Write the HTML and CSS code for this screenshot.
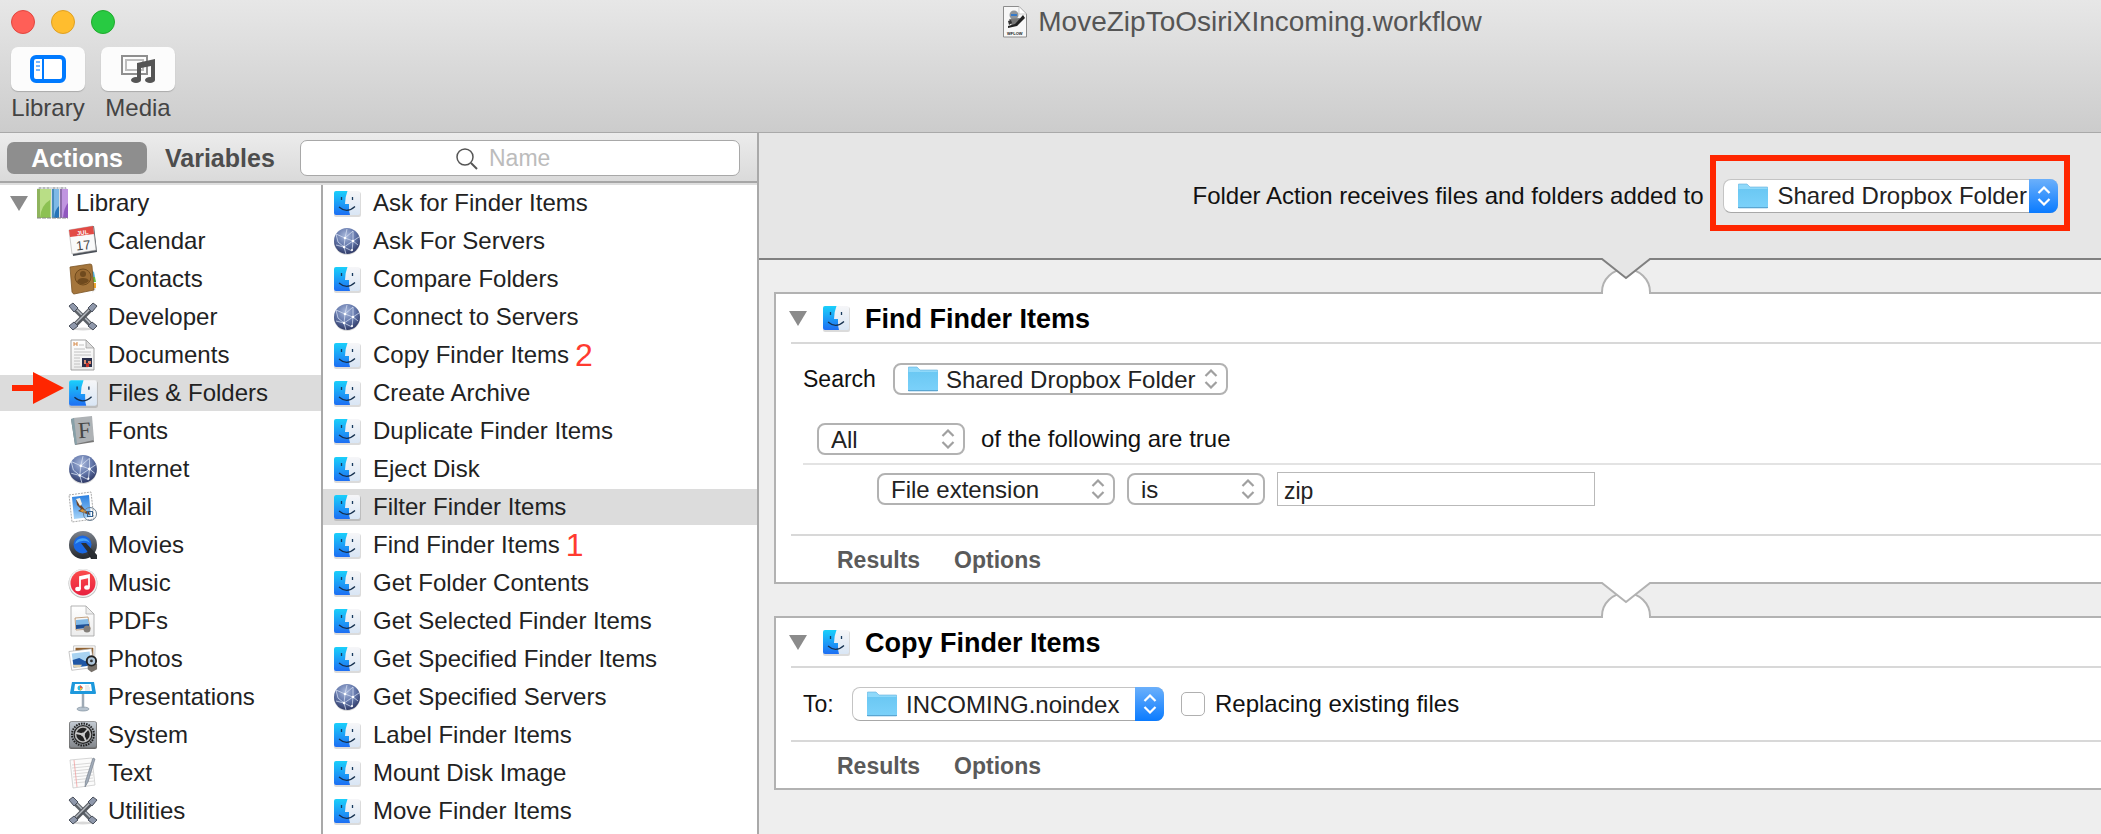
FILE: index.html
```
<!DOCTYPE html>
<html lang="en">
<head>
<meta charset="utf-8">
<title>MoveZipToOsiriXIncoming.workflow</title>
<link rel="stylesheet" href="styles.css">
</head>
<body>
<svg class="sprite" aria-hidden="true">
  <defs>
    <linearGradient id="gBlue" x1="0" y1="0" x2="0" y2="1"><stop offset="0" stop-color="#1ad0fb"/><stop offset="1" stop-color="#1e6ef3"/></linearGradient>
    <linearGradient id="gFace" x1="0" y1="0" x2="0" y2="1"><stop offset="0" stop-color="#f6f6f8"/><stop offset="1" stop-color="#d9e6f5"/></linearGradient>
    <radialGradient id="gGlobe" cx=".45" cy=".3" r=".75"><stop offset="0" stop-color="#a9b9dc"/><stop offset=".5" stop-color="#6478ab"/><stop offset="1" stop-color="#27305c"/></radialGradient>
    <linearGradient id="gMetal" x1="0" y1="0" x2="0" y2="1"><stop offset="0" stop-color="#c3cad2"/><stop offset="1" stop-color="#84888d"/></linearGradient>
    <linearGradient id="gPaper" x1="0" y1="0" x2="0" y2="1"><stop offset="0" stop-color="#ffffff"/><stop offset="1" stop-color="#ececec"/></linearGradient>
    <linearGradient id="gFolder" x1="0" y1="0" x2="0" y2="1"><stop offset="0" stop-color="#6bc8f3"/><stop offset="1" stop-color="#7bd1fa"/></linearGradient>
    <linearGradient id="gSky" x1="0" y1="0" x2="0" y2="1"><stop offset="0" stop-color="#2a7fe0"/><stop offset="1" stop-color="#a5d3f8"/></linearGradient>
    <linearGradient id="gMusic" x1="0" y1="0" x2="0" y2="1"><stop offset="0" stop-color="#fb4b4b"/><stop offset="1" stop-color="#e8203f"/></linearGradient>
    <linearGradient id="gQt" x1="0" y1="0" x2="0" y2="1"><stop offset="0" stop-color="#7d838d"/><stop offset="1" stop-color="#23272d"/></linearGradient>
  </defs>
  <symbol id="finder" viewBox="0 0 28 28">
    <rect x="1" y="3" width="27" height="25" rx="2" fill="#000" opacity=".14"/>
    <rect x="1" y="2" width="26" height="24" rx="2" fill="url(#gFace)"/>
    <path d="M3 2H14.500Q12 8 12 15H16V18Q15.800 22 17 26H3Q1 26 1 24V4Q1 2 3 2Z" fill="url(#gBlue)"/>
    <path d="M8.500 8V11M19.500 8V11" stroke="#173a5e" stroke-width="1.300" fill="none"/>
    <path d="M6 18Q14 25 22 17.500" stroke="#16304e" stroke-width="1.200" fill="none"/>
  </symbol>
  <symbol id="globe" viewBox="0 0 28 28">
    <circle cx="14" cy="15" r="13" fill="#000" opacity=".15"/>
    <circle cx="14" cy="14" r="13" fill="url(#gGlobe)"/>
    <path d="M3 7L12 11L20 4M12 11L11 20L3 18M12 11L20 14L26 10M11 20L20 14L19 24M11 20L13 27M3 7L5 15L11 20M20 4L20 14L25 18M19 24L11 20M12 11L14 2" stroke="#d6e0f2" stroke-width=".9" fill="none" opacity=".85"/>
    <g fill="#fff"><circle cx="12" cy="11" r="1.300"/><circle cx="11" cy="20" r="1.200"/><circle cx="20" cy="14" r="1.300"/><circle cx="19" cy="23" r="1"/></g>
  </symbol>
  <symbol id="folder" viewBox="0 0 30 26">
    <path d="M0 2Q0 1 1 1H9L12 4H29Q30 4 30 5V24Q30 25 29 25H1Q0 25 0 24Z" fill="#8fd9fa" stroke="#62aedb" stroke-width=".6"/>
    <path d="M0 6H30V24Q30 25 29 25H1Q0 25 0 24Z" fill="url(#gFolder)"/>
    <path d="M0 24.500H30" stroke="#5aa6d2"/>
  </symbol>
  <symbol id="books" viewBox="0 0 32 32">
    <path d="M1 2L3 0H30L31 2V31H1Z" fill="#d9dde0"/>
    <path d="M3 1H14M17 1H22M25 1H30" stroke="#999" stroke-dasharray="2 2"/>
    <path d="M1 2H15V31H1Z" fill="#b9de86"/><path d="M4 31Q5 18 14 13V31Z" fill="#8cc152"/><path d="M1 2H4V31H1Z" fill="#8fb45d"/>
    <path d="M16 2H23V31H16Z" fill="#7eb9e6"/><path d="M18 31Q19 22 23 19V31Z" fill="#2674b8"/><path d="M16 2H18V31H16Z" fill="#4b8ebe"/>
    <path d="M24 2H32V31H24Z" fill="#c095e0"/><path d="M27 31Q28 20 32 16V31Z" fill="#9058bf"/><path d="M24 2H26V31H24Z" fill="#8f6eac"/>
    <path d="M1 31H32" stroke="#888" stroke-dasharray="4 1"/>
  </symbol>
  <symbol id="contacts" viewBox="0 0 30 32">
    <path d="M23 6L26 8L28 27L24 30Z" fill="#eee"/><path d="M24 8L26 9L27 14H24Z" fill="#52b8e8"/><path d="M25 14H27L28 19H25Z" fill="#68bd49"/><path d="M25 20H28V25H25Z" fill="#efa72e"/>
    <path d="M2 4L22 1Q24 1 24 3L26 27L6 31Q5 31 4 29Z" fill="#a5763c" stroke="#7b5424" stroke-width=".8"/>
    <circle cx="15" cy="14" r="8" fill="#9b6c34" stroke="#714b1d"/><circle cx="15" cy="11" r="3" fill="#6f4a1e"/><path d="M9 19Q10 15 15 15Q20 15 21 18Q15 24 9 19Z" fill="#6f4a1e"/>
  </symbol>
  <symbol id="tools" viewBox="0 0 30 30">
    <ellipse cx="15" cy="27" rx="10" ry="1.500" fill="#000" opacity=".15"/>
    <path d="M5 5L25 25" stroke="#5d6268" stroke-width="5"/><path d="M5 4L25 24" stroke="#b9bec5" stroke-width="1.500"/>
    <path d="M25 5L5 25" stroke="#55595f" stroke-width="5"/><path d="M24 5L5 24" stroke="#b5b9bf" stroke-width="1.500"/>
    <g fill="#8f98ab" stroke="#4a505c"><path d="M1 4L5 1L10 6L6 10Z"/><path d="M29 4L25 1L20 6L24 10Z"/><path d="M1 24L6 20L10 24L5 28Z"/><path d="M29 24L24 20L20 24L25 28Z"/></g>
  </symbol>
  <symbol id="document" viewBox="0 0 30 32">
    <path d="M3 1H18L26 9V31H3Z" fill="url(#gPaper)" stroke="#999" stroke-width=".9"/><path d="M18 1V9H26Z" fill="#ddd" stroke="#999" stroke-width=".7"/>
    <path d="M6 3V7M9 3V7M6 5H9" stroke="#d58a4a" fill="none"/>
    <path d="M11 6H16M6 10H17M6 13H23M6 16H23M6 19H12M6 22H12M6 25H12M6 28H20" stroke="#bbb" stroke-width=".9"/>
    <path d="M14 19H24V28H14Z" fill="#2b2f49"/><path d="M16 21H18V25H16ZM20 22H23V25H20Z" fill="#d98a70"/><path d="M18 24H21V28H18Z" fill="#c7312b"/>
  </symbol>
  <symbol id="mail" viewBox="0 0 30 32">
    <path d="M1 4L23 1L26 28L4 31Z" fill="#fff" stroke="#a9a9a9" stroke-dasharray="2 1"/>
    <path d="M4 6L21 4L23 26L6 28Z" fill="url(#gSky)"/>
    <path d="M8 8L13 14L18 20L21 21L22 24L16 22L10 20L13 18L9 14Z" fill="#6d4528"/><path d="M8 8L12 7L14 13L12 15Z" fill="#f5f1e8"/><path d="M14 18L18 20L17 22L12 20Z" fill="#d99535"/>
    <circle cx="22" cy="23" r="6.500" fill="none" stroke="#6c7f91"/><rect x="19.500" y="20.500" width="5" height="5" fill="none" stroke="#36618d"/>
  </symbol>
  <symbol id="movies" viewBox="0 0 30 30">
    <circle cx="15" cy="15" r="14" fill="url(#gQt)"/><path d="M17 17L23 20L29 26V29H23Z" fill="#24272b"/>
    <circle cx="14.500" cy="14.500" r="9" fill="#1a68e3"/><path d="M7 14A8 8 0 0 1 22 13Q16 8 7 14Z" fill="#44a4fa"/>
    <path d="M13 13L18 13L29 25V29H25Z" fill="#2a2e33"/>
  </symbol>
  <symbol id="music" viewBox="0 0 30 30">
    <circle cx="15" cy="15.500" r="14.500" fill="#bbb"/><circle cx="15" cy="15" r="14" fill="#f1f1f1"/><circle cx="15" cy="15" r="12.500" fill="url(#gMusic)"/>
    <path d="M12 21V9L21 7V19" fill="none" stroke="#fff" stroke-width="1.800"/><path d="M12 9L21 7V10L12 12Z" fill="#fff"/><ellipse cx="10" cy="21" rx="2.800" ry="2.200" fill="#fff"/><ellipse cx="19" cy="19.500" rx="2.800" ry="2.200" fill="#fff"/>
  </symbol>
  <symbol id="pdf" viewBox="0 0 30 32">
    <path d="M3 1H18L26 9V31H3Z" fill="url(#gPaper)" stroke="#aaa" stroke-width=".9"/><path d="M18 1V9H26Z" fill="#eee" stroke="#aaa" stroke-width=".7"/>
    <path d="M7 13L20 12L22 24L8 25Z" fill="#f8f8f8" stroke="#b48b63" stroke-width=".8"/><path d="M8 15L20 14L21 20L8 21Z" fill="#82b9e6"/><path d="M8 20L21 19V23L8 24Z" fill="#1e4f95"/><circle cx="19" cy="24" r="3.500" fill="#847f7a"/>
  </symbol>
  <symbol id="photos" viewBox="0 0 32 30">
    <path d="M6 1H29L28 23L6 22Z" fill="#fff" stroke="#aaa" stroke-width=".7"/><path d="M8 3H27V18H8Z" fill="#91612f"/>
    <path d="M1 7L25 4L28 24L4 27Z" fill="#fff" stroke="#aaa" stroke-width=".7"/>
    <path d="M4 9L23 7L25 22L6 24Z" fill="#a9d3f1"/><path d="M5 16L12 14L18 17L25 18V22L6 24Z" fill="#1f57a5"/><path d="M5 21L15 21L13 24H6Z" fill="#ddd2b4"/>
    <path d="M21 18L31 20V26L25 29L21 26Z" fill="#77716a"/><circle cx="25" cy="17" r="5" fill="#afc6da" stroke="#222" stroke-width="2"/><circle cx="25" cy="17" r="1.500" fill="#333"/>
  </symbol>
  <symbol id="presentations" viewBox="0 0 30 32">
    <ellipse cx="15" cy="28" rx="6" ry="2" fill="#b7c3ce" stroke="#8292a1" stroke-width=".7"/><path d="M15 13V27" stroke="#9eaab5" stroke-width="2.500"/>
    <path d="M4 1H26L28 12Q28 13 27 13H3Q2 13 2 12Z" fill="#1d98dc"/><path d="M7 3H23L24 10H6Z" fill="#fff"/>
    <circle cx="12" cy="7" r="2.500" fill="#30b9da"/><path d="M12 4L15 7H12Z" fill="#ec5844"/><path d="M12 7H15L12 10Z" fill="#f0b83d"/><path d="M17 5H21M17 7H22M17 9H22" stroke="#ccc" stroke-width=".8"/>
  </symbol>
  <symbol id="system" viewBox="0 0 30 30">
    <rect x="1" y="2" width="28" height="27" rx="2" fill="#666"/><rect x="1.500" y="1.500" width="27" height="26" rx="2" fill="url(#gMetal)" stroke="#777" stroke-width=".7"/>
    <circle cx="15" cy="14.500" r="11" fill="none" stroke="#222" stroke-width="2" stroke-dasharray="1.600 1"/><circle cx="15" cy="14.500" r="9.500" fill="#242424"/>
    <circle cx="15" cy="14.500" r="7.500" fill="none" stroke="#bbb" stroke-width="1.600"/><path d="M15 14.500L8 13M15 14.500L20 9M15 14.500L18 21" stroke="#ccc" stroke-width="1.800"/><circle cx="15" cy="14.500" r="2" fill="#ccc"/>
  </symbol>
  <symbol id="text" viewBox="0 0 30 32">
    <path d="M2 3L24 1L27 28L5 31Z" fill="#fbfbfb" stroke="#ccc" stroke-width=".8"/>
    <path d="M4 8L24 6M4 11L24 9M5 14L24 12M5 17L25 15M5 20L25 18M6 23L25 21M6 26L26 24" stroke="#d0d0d0" stroke-width=".8"/><path d="M6 3L9 30" stroke="#f2a0a0" stroke-width=".8"/>
    <path d="M25 1L27 2L20 25L17 30L17.500 24Z" fill="#a3adba" stroke="#6c7683" stroke-width=".6"/>
  </symbol>
  <symbol id="stepper" viewBox="0 0 14 20">
    <path d="M1.500 7L7 1.500L12.500 7M1.500 13L7 18.500L12.500 13" fill="none" stroke="currentColor" stroke-width="2.200"/>
  </symbol>
  <symbol id="disclosure" viewBox="0 0 18 15"><path d="M0 0H18L9 15Z" fill="#8b8b8b"/></symbol>
</svg>

<div class="window">
  <header class="titlebar">
    <div class="titlerow">
      <div class="lights">
        <button class="light light-close" aria-label="Close"></button>
        <button class="light light-min" aria-label="Minimize"></button>
        <button class="light light-zoom" aria-label="Zoom"></button>
      </div>
      <h1 class="title">
        <svg class="title-icon" viewBox="0 0 24 32" aria-hidden="true">
          <path d="M.5 .5H16L23.500 8V31H.5Z" fill="#f7f7f7" stroke="#8c8c8c"/><path d="M16 .5V8H23.500Z" fill="#fff" stroke="#bbb" stroke-width=".7"/>
          <circle cx="11" cy="9" r="4.500" fill="#8f9499"/><path d="M8 9H14" stroke="#3479c9" stroke-width="2"/>
          <path d="M6 13L17 12L14 20H9Z" fill="#777"/><path d="M5 20L12 18L20 9L22 12L14 20L5 22Z" fill="#222"/><path d="M5 15L8 14L9 17L6 19Z" fill="#333"/>
          <text x="4" y="29" font-size="4" font-weight="bold" fill="#222">WFLOW</text>
        </svg>
        MoveZipToOsiriXIncoming.workflow
      </h1>
    </div>
    <div class="toolbar">
      <button class="tool">
        <span class="tool-face">
          <svg width="36" height="28" viewBox="0 0 36 28" aria-hidden="true"><rect x="2" y="2" width="32" height="24" rx="4" fill="#fff" stroke="#007aff" stroke-width="4"/><path d="M13 3V25" stroke="#007aff" stroke-width="2"/><path d="M6 7H10M6 11H10M6 15H10" stroke="#7ab8ff" stroke-width="2"/></svg>
        </span>
        Library
      </button>
      <button class="tool">
        <span class="tool-face">
          <svg width="36" height="30" viewBox="0 0 36 30" aria-hidden="true"><rect x="2" y="2" width="25" height="18" fill="none" stroke="#8f8f8f" stroke-width="2"/><rect x="6" y="6" width="17" height="10" fill="none" stroke="#bdbdbd" stroke-width="2"/><path d="M17 9L35 5V26H31V12L21 14V26H17Z" fill="#555"/><ellipse cx="16" cy="26" rx="5" ry="3" fill="#555"/><ellipse cx="30" cy="26" rx="5" ry="3" fill="#555"/></svg>
        </span>
        Media
      </button>
    </div>
  </header>

  <div class="body">
    <aside class="sidebar">
      <div class="filter">
        <button class="tab tab-on">Actions</button>
        <button class="tab">Variables</button>
        <div class="search">
          <svg class="search-icon" viewBox="0 0 22 22" aria-hidden="true"><circle cx="9" cy="9" r="8" fill="none" stroke="#555" stroke-width="1.500"/><path d="M15 15L21 21" stroke="#555" stroke-width="2"/></svg>
          <input class="search-input" type="text" placeholder="Name" aria-label="Name">
        </div>
      </div>
      <div class="lists">
        <nav class="list categories" aria-label="Library">
          <button class="row row-root"><svg class="tri"><use href="#disclosure"/></svg><svg class="icon-root"><use href="#books"/></svg>Library</button>
          <button class="row"><svg class="icon" viewBox="0 0 30 32" aria-hidden="true"><path d="M3 5L26 1L29 27L5 31Z" fill="#4b5058"/><path d="M1 5L25 1L28 25L4 29Z" fill="#fafafa" stroke="#aaa" stroke-width=".6"/><path d="M1 5L25 1L26 9L2 12Z" fill="#e24a44"/><text x="9" y="10" font-size="6" font-weight="bold" fill="#fff" transform="rotate(-8 13 8)">JUL</text><text x="8" y="25" font-size="13" fill="#444" transform="rotate(-6 14 20)">17</text></svg>Calendar</button>
          <button class="row"><svg class="icon"><use href="#contacts"/></svg>Contacts</button>
          <button class="row"><svg class="icon"><use href="#tools"/></svg>Developer</button>
          <button class="row"><svg class="icon"><use href="#document"/></svg>Documents</button>
          <button class="row row-on"><svg class="arrow" viewBox="0 0 52 32" aria-hidden="true"><path d="M0 13H21V0L52 16L21 32V19H0Z" fill="#ff2600"/></svg><svg class="icon"><use href="#finder"/></svg>Files &amp; Folders</button>
          <button class="row"><svg class="icon" viewBox="0 0 30 32" aria-hidden="true"><path d="M3 4L22 2L26 27L7 30Z" fill="#777"/><path d="M5 3L24 1L26 25L8 29Z" fill="#aeb2b5"/><path d="M3 4L6 3L9 29L7 30Z" fill="#87a0a8"/><text x="10" y="23" font-family="Liberation Serif" font-size="23" fill="#474747" transform="rotate(-4 15 15)">F</text></svg>Fonts</button>
          <button class="row"><svg class="icon"><use href="#globe"/></svg>Internet</button>
          <button class="row"><svg class="icon"><use href="#mail"/></svg>Mail</button>
          <button class="row"><svg class="icon"><use href="#movies"/></svg>Movies</button>
          <button class="row"><svg class="icon"><use href="#music"/></svg>Music</button>
          <button class="row"><svg class="icon"><use href="#pdf"/></svg>PDFs</button>
          <button class="row"><svg class="icon"><use href="#photos"/></svg>Photos</button>
          <button class="row"><svg class="icon"><use href="#presentations"/></svg>Presentations</button>
          <button class="row"><svg class="icon"><use href="#system"/></svg>System</button>
          <button class="row"><svg class="icon"><use href="#text"/></svg>Text</button>
          <button class="row"><svg class="icon"><use href="#tools"/></svg>Utilities</button>
        </nav>
        <nav class="list actions" aria-label="Actions">
          <button class="row"><svg class="icon"><use href="#finder"/></svg>Ask for Finder Items</button>
          <button class="row"><svg class="icon"><use href="#globe"/></svg>Ask For Servers</button>
          <button class="row"><svg class="icon"><use href="#finder"/></svg>Compare Folders</button>
          <button class="row"><svg class="icon"><use href="#globe"/></svg>Connect to Servers</button>
          <button class="row"><svg class="icon"><use href="#finder"/></svg>Copy Finder Items<span class="mark">2</span></button>
          <button class="row"><svg class="icon"><use href="#finder"/></svg>Create Archive</button>
          <button class="row"><svg class="icon"><use href="#finder"/></svg>Duplicate Finder Items</button>
          <button class="row"><svg class="icon"><use href="#finder"/></svg>Eject Disk</button>
          <button class="row row-on"><svg class="icon"><use href="#finder"/></svg>Filter Finder Items</button>
          <button class="row"><svg class="icon"><use href="#finder"/></svg>Find Finder Items<span class="mark">1</span></button>
          <button class="row"><svg class="icon"><use href="#finder"/></svg>Get Folder Contents</button>
          <button class="row"><svg class="icon"><use href="#finder"/></svg>Get Selected Finder Items</button>
          <button class="row"><svg class="icon"><use href="#finder"/></svg>Get Specified Finder Items</button>
          <button class="row"><svg class="icon"><use href="#globe"/></svg>Get Specified Servers</button>
          <button class="row"><svg class="icon"><use href="#finder"/></svg>Label Finder Items</button>
          <button class="row"><svg class="icon"><use href="#finder"/></svg>Mount Disk Image</button>
          <button class="row"><svg class="icon"><use href="#finder"/></svg>Move Finder Items</button>
        </nav>
      </div>
    </aside>

    <main class="workflow">
      <div class="receives">
        <label for="target">Folder Action receives files and folders added to</label>
        <div class="picker picker-blue picker-marked">
          <svg class="picker-folder"><use href="#folder"/></svg>
          <select id="target" class="select select-folder"><option>Shared Dropbox Folder</option></select>
          <span class="cap"><svg class="steps"><use href="#stepper"/></svg></span>
        </div>
      </div>

      <div class="canvas">
        <div class="connector">
          <svg class="joint" viewBox="0 0 52 36" aria-hidden="true"><path d="M2 36V34A24 23 0 0 1 50 34V36" fill="#fff" stroke="#b2b2b2" stroke-width="2"/><path d="M2 0H50V1L26 20L2 1Z" fill="#e6e6e6"/><path d="M0 1H2L26 20L50 1H52" fill="none" stroke="#808080" stroke-width="2"/></svg>
        </div>

        <section class="card">
          <div class="card-head">
            <button class="fold" aria-label="Collapse"><svg class="tri"><use href="#disclosure"/></svg></button>
            <svg class="icon"><use href="#finder"/></svg>
            <h2 class="card-title">Find Finder Items</h2>
          </div>
          <div class="find-body">
            <div class="line">
              <label class="search-label" for="where">Search</label>
              <div class="picker">
                <svg class="picker-folder"><use href="#folder"/></svg>
                <select id="where" class="select select-folder"><option>Shared Dropbox Folder</option></select>
                <svg class="steps"><use href="#stepper"/></svg>
              </div>
            </div>
            <div class="line line-all">
              <div class="picker picker-all">
                <select id="match" class="select"><option>All</option></select>
                <svg class="steps"><use href="#stepper"/></svg>
              </div>
              <label for="match">of the following are true</label>
            </div>
            <div class="line line-rule">
              <div class="picker picker-attr">
                <select class="select" aria-label="Attribute"><option>File extension</option></select>
                <svg class="steps"><use href="#stepper"/></svg>
              </div>
              <div class="picker picker-op">
                <select class="select" aria-label="Comparison"><option>is</option></select>
                <svg class="steps"><use href="#stepper"/></svg>
              </div>
              <input class="value" type="text" value="zip" aria-label="Value">
            </div>
          </div>
          <div class="card-foot"><button class="foot-btn">Results</button><button class="foot-btn">Options</button></div>
        </section>

        <div class="connector">
          <svg class="joint" viewBox="0 0 52 36" aria-hidden="true"><path d="M2 36V34A24 23 0 0 1 50 34V36" fill="#fff" stroke="#b2b2b2" stroke-width="2"/><path d="M2 0H50V1L26 20L2 1Z" fill="#fff"/><path d="M0 1H2L26 20L50 1H52" fill="none" stroke="#b2b2b2" stroke-width="2"/></svg>
        </div>

        <section class="card">
          <div class="card-head">
            <button class="fold" aria-label="Collapse"><svg class="tri"><use href="#disclosure"/></svg></button>
            <svg class="icon"><use href="#finder"/></svg>
            <h2 class="card-title">Copy Finder Items</h2>
          </div>
          <div class="copy-body">
            <label class="to-label" for="dest">To:</label>
            <div class="picker picker-blue picker-dest">
              <svg class="picker-folder"><use href="#folder"/></svg>
              <select id="dest" class="select select-folder"><option>INCOMING.noindex</option></select>
              <span class="cap"><svg class="steps"><use href="#stepper"/></svg></span>
            </div>
            <input id="replace" class="check" type="checkbox">
            <label for="replace">Replacing existing files</label>
          </div>
          <div class="card-foot"><button class="foot-btn">Results</button><button class="foot-btn">Options</button></div>
        </section>
      </div>
    </main>
  </div>
</div>
</body>
</html>
```

FILE: styles.css
```
* {
  box-sizing: border-box;
}

body {
  margin: 0;
  font-family: "Liberation Sans", Arial, sans-serif;
  font-size: 24px;
  color: #111;
}

button,
input,
select {
  margin: 0;
  font-family: inherit;
  font-size: inherit;
  color: inherit;
}

button {
  padding: 0;
  border: 0;
  background: none;
}

svg {
  flex: none;
}

.sprite {
  position: absolute;
  width: 0;
  height: 0;
}

.window {
  display: flex;
  flex-direction: column;
  height: 100vh;
  overflow: hidden;
}

/* Title bar */
.titlebar {
  padding: 0 11px 11px;
  border-bottom: 1px solid #a9a9a9;
  background: linear-gradient(#e7e7e7, #cccccc);
}

.titlerow {
  display: flex;
  align-items: center;
  height: 44px;
  margin-bottom: 3px;
}

.lights {
  display: flex;
  gap: 16px;
}

.light {
  width: 24px;
  height: 24px;
  border: 1px solid;
  border-radius: 50%;
}

.light-close {
  background: #ff5f57;
  border-color: #e2463f;
}

.light-min {
  background: #ffbd2e;
  border-color: #dfa023;
}

.light-zoom {
  background: #28ca42;
  border-color: #1fab2d;
}

.title {
  display: flex;
  flex: 1;
  align-items: center;
  justify-content: center;
  gap: 11px;
  margin: 0;
  padding-left: 280px;
  font-size: 28px;
  font-weight: normal;
  color: #555;
}

.title-icon {
  width: 24px;
  height: 32px;
}

.toolbar {
  display: flex;
  gap: 16px;
}

.tool {
  display: flex;
  flex-direction: column;
  align-items: center;
  gap: 3px;
  line-height: 27px;
  color: #444;
}

.tool-face {
  display: flex;
  align-items: center;
  justify-content: center;
  width: 74px;
  height: 44px;
  border-radius: 7px;
  background: #fcfcfc;
  box-shadow: 0 1px 1px #aaa;
}

/* Library sidebar */
.body {
  display: flex;
  flex: 1;
  min-height: 0;
}

.sidebar {
  display: flex;
  flex: none;
  flex-direction: column;
  width: 759px;
  border-right: 2px solid #a9a9a9;
}

.filter {
  display: flex;
  align-items: center;
  gap: 18px;
  height: 50px;
  padding: 2px 17px 0 7px;
  border-bottom: 2px solid #a6a6a6;
  background: linear-gradient(#ececec, #dadada);
}

.tab {
  height: 32px;
  font-size: 25px;
  font-weight: bold;
  color: #4d4d4d;
}

.tab-on {
  width: 140px;
  border-radius: 7px;
  background: #8e8e8e;
  color: #fff;
}

.search {
  position: relative;
  width: 440px;
  margin-left: auto;
}

.search-icon {
  position: absolute;
  top: 8px;
  left: 156px;
  width: 22px;
  height: 22px;
}

.search-input {
  display: block;
  width: 100%;
  height: 36px;
  padding: 0 8px 0 188px;
  border: 1px solid #a8a8a8;
  border-radius: 7px;
  background: #fff;
  font-size: 23px;
}

.search-input::placeholder {
  color: #bcbcbc;
}

.lists {
  display: flex;
  flex: 1;
  min-height: 0;
  border-top: 2px solid #dedede;
  background: #fff;
}

.list {
  display: flex;
  flex-direction: column;
  gap: 2px;
  overflow: hidden;
}

.categories {
  flex: none;
  width: 323px;
  border-right: 2px solid #a9a9a9;
}

.actions {
  flex: 1;
}

.row {
  position: relative;
  display: flex;
  flex: none;
  align-items: center;
  gap: 10px;
  height: 36px;
  padding-left: 68px;
  color: #222;
  text-align: left;
}

.row-root {
  gap: 8px;
  padding-left: 10px;
}

.row-on {
  background: #dcdcdc;
}

.actions .row {
  gap: 12px;
  padding-left: 10px;
}

.icon {
  width: 30px;
  height: 32px;
}

.actions .icon,
.card-head .icon {
  width: 28px;
  height: 28px;
}

.icon-root {
  width: 32px;
  height: 32px;
}

.tri {
  display: block;
  width: 18px;
  height: 15px;
}

.arrow {
  position: absolute;
  top: -3px;
  left: 12px;
  width: 52px;
  height: 32px;
}

.mark {
  margin-left: -6px;
  font-size: 32px;
  line-height: 36px;
  color: #ff3b30;
}

/* Workflow */
.workflow {
  display: flex;
  flex: 1;
  flex-direction: column;
  min-width: 0;
  background: #eee;
}

.receives {
  display: flex;
  align-items: center;
  justify-content: center;
  gap: 20px;
  height: 127px;
  padding-left: 391px;
  border-bottom: 2px solid #808080;
  background: #e6e6e6;
}

.canvas {
  padding-left: 15px;
}

.connector {
  position: relative;
  height: 32px;
}

.joint {
  position: absolute;
  top: -2px;
  left: calc(50% + 162px);
  z-index: 1;
  width: 52px;
  height: 36px;
}

/* Cards run up to the right edge, so they have no border there. */
.card {
  padding-left: 15px;
  border: 2px solid #b2b2b2;
  border-right: 0;
  background: #fff;
}

.card-head {
  display: flex;
  align-items: center;
  height: 50px;
  gap: 15px;
  border-bottom: 2px solid #d8d8d8;
}

.fold {
  margin-left: -2px;
}

.card-title {
  margin: 0;
  padding-top: 3px;
  font-size: 27px;
  color: #000;
}

.find-body {
  padding: 19px 0 28px 12px;
}

.line {
  display: flex;
  align-items: center;
}

.search-label {
  width: 90px;
  font-size: 23px;
}

.line-all {
  gap: 16px;
  padding: 28px 0 8px 14px;
  border-bottom: 2px solid #e3e3e3;
}

.line-rule {
  gap: 12px;
  padding: 7px 0 0 74px;
}

.card-foot {
  display: flex;
  gap: 34px;
  height: 48px;
  padding: 2px 0 0 46px;
  border-top: 2px solid #d8d8d8;
}

.foot-btn {
  font-size: 23px;
  font-weight: bold;
  color: #5a5a5a;
}

.copy-body {
  display: flex;
  align-items: center;
  height: 72px;
  padding-left: 12px;
}

.to-label {
  width: 49px;
  font-size: 23px;
}

/* Pop-up menus */
.picker {
  position: relative;
  width: 335px;
}

.picker-all {
  width: 148px;
}

.picker-attr {
  width: 238px;
}

.picker-op {
  width: 138px;
}

.picker-dest {
  width: 312px;
}

.select {
  display: block;
  width: 100%;
  height: 32px;
  padding: 0 26px 0 12px;
  border: 2px solid #b2b2b2;
  border-radius: 8px;
  background: #fff;
  color: #222;
  appearance: none;
}

.select-folder {
  padding-left: 51px;
}

.picker-folder {
  position: absolute;
  top: 3px;
  left: 15px;
  width: 30px;
  height: 26px;
}

.steps {
  position: absolute;
  top: 6px;
  right: 10px;
  width: 14px;
  height: 20px;
  color: #a0a0a0;
}

.picker-blue .select {
  height: 34px;
  border: 1px solid #c4c4c4;
  border-bottom-color: #a8a8a8;
  padding-left: 53px;
}

.picker-blue .picker-folder {
  top: 4px;
}

.cap {
  position: absolute;
  top: 0;
  right: 0;
  display: flex;
  align-items: center;
  justify-content: center;
  width: 29px;
  height: 34px;
  border-radius: 0 8px 8px 0;
  background: linear-gradient(#6bb0fb, #0a7bff);
  pointer-events: none;
}

.cap .steps {
  position: static;
  color: #fff;
}

.picker-marked::after {
  content: "";
  position: absolute;
  inset: -24px -12px -18px -13px;
  border: 6px solid #ff2600;
  pointer-events: none;
}

.value {
  width: 318px;
  height: 34px;
  padding: 4px 6px 0;
  border: 1px solid #b9b9b9;
  background: #fff;
  font-size: 23px;
  color: #222;
}

.check {
  width: 24px;
  height: 24px;
  margin: 0 10px 0 17px;
  border: 1px solid #b0b0b0;
  border-radius: 5px;
  background: #fff;
  appearance: none;
}
```
